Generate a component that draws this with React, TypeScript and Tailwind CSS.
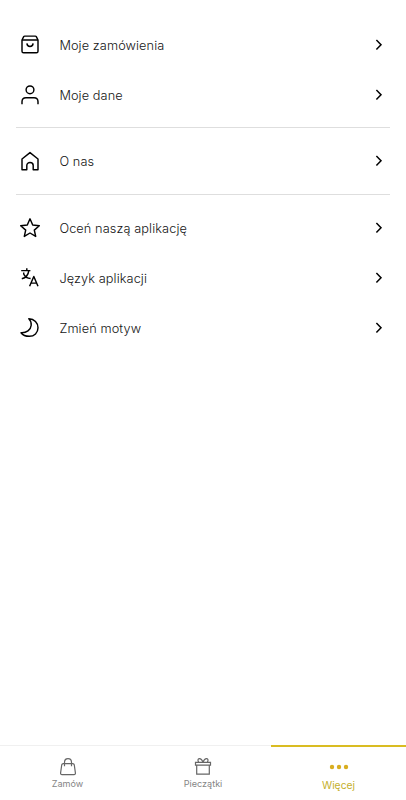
import React from "react";

const icons: Record<string, React.ReactNode> = {
  orders: (
    <>
      <path d="M4 7 5.7 3.6Q6 3.1 6.7 3.1H17.3Q18 3.1 18.3 3.6L20 7V18.2Q20 19.8 18.4 19.8H5.6Q4 19.8 4 18.2Z" />
      <path d="M4 7H20M8.9 10.4C9.3 14.6 14.7 14.6 15.1 10.4" />
    </>
  ),
  user: (
    <>
      <circle cx="12" cy="6.8" r="3.9" />
      <path d="M4 21.3V18.8Q4 14.8 8 14.8H16Q20 14.8 20 18.8V21.3" />
    </>
  ),
  home: (
    <path d="M4 20.7V10L12 3.6 20 10V20.7H15.2V16.5C15.2 12.5 8.8 12.5 8.8 16.5V20.7Z" />
  ),
  star: (
    <path d="m12 2.8 2.7 6.2 6.6.7-5 4.4 1.4 6.3L12 17l-5.7 3.4 1.4-6.3-5-4.4L9.3 9Z" />
  ),
  language: (
    <>
      <path d="M3.2 4.6H12.4M8.8 2.2V4.6M5.7 6.4V8C6.8 10.6 8.8 12.4 12.6 12.5M10.8 4.6C10.3 8.9 7.8 11.8 3.8 12.8" />
      <path d="m11.6 20.2 4.2-9.7L20 20.2M13 17.1H18.6" />
    </>
  ),
  moon: (
    <path d="M10.8 2.8C16.4 3 20 6.9 20 11.8C20 16.8 16.3 20.3 11.3 20.3C7.7 20.3 4.7 18.9 3 16.7C8.4 17.1 12.8 13.8 13.2 9.2C13.4 6.6 12.5 4.4 10.8 2.8Z" />
  ),
};

function Row({ icon, label }: { icon: string; label: string }) {
  return (
    <button className="flex h-[50px] w-full items-center pr-[21px] pl-[18px] text-left">
      <svg
        width="24"
        height="24"
        viewBox="0 0 24 24"
        fill="none"
        stroke="currentColor"
        strokeWidth="1.45"
        strokeLinejoin="round"
      >
        {icons[icon]}
      </svg>
      <span className="ml-[17.4px] flex-1 pt-[2px] text-[12.75px] font-light tracking-[0.09px] text-[#151515]">
        {label}
      </span>
      <svg
        width="12"
        height="12"
        viewBox="0 0 12 12"
        fill="none"
        stroke="currentColor"
        strokeWidth="1.5"
      >
        <path d="m3.4 1.1 4.6 4.7-4.6 4.7" />
      </svg>
    </button>
  );
}

export default function App() {
  return (
    <div className="flex h-[800px] w-[406px] flex-col bg-white font-['Inter',sans-serif] text-black">
      <main className="flex-1 pt-5">
        <Row icon="orders" label="Moje zamówienia" />
        <Row icon="user" label="Moje dane" />
        <div className="mx-4 mt-[7px] mb-2 h-px bg-[#dedede]" />
        <Row icon="home" label="O nas" />
        <div className="mx-4 mt-2 mb-2 h-px bg-[#dedede]" />
        <Row icon="star" label="Oceń naszą aplikację" />
        <Row icon="language" label="Język aplikacji" />
        <Row icon="moon" label="Zmień motyw" />
      </main>
      <nav className="grid h-[55px] grid-cols-[135px_136px_135px] text-[9.1px] text-[#858585]">
        <button className="flex flex-col items-center border-t border-[#f0f0f0] pt-[11px]">
          <svg width="18" height="20" viewBox="0 0 18 20" fill="none" stroke="#666" strokeWidth="1.2">
            <path d="M4.2 6.7H13.8Q15 6.7 15.3 8L16.4 15.8Q16.6 17.6 15 17.6H3Q1.4 17.6 1.6 15.8L2.7 8Q3 6.7 4.2 6.7Z" />
            <path d="M5.5 9.3V5.3C5.5 .4 12.5 .4 12.5 5.3V9.3" />
          </svg>
          <span className="mt-px leading-[11px]">Zamów</span>
        </button>
        <button className="flex flex-col items-center border-t border-[#f0f0f0] pt-[11px]">
          <svg width="18" height="20" viewBox="0 0 18 20" fill="none" stroke="#666" strokeWidth="1.2">
            <path d="M1.5 5.4H16.5V8.2H1.5ZM2.7 8.2V17.2H15.3V8.2" />
            <path d="M9 5.4C8 2.6 6.8 1.5 5.3 1.6C3.8 1.8 3.5 3.8 4.7 5M9 5.4C10 2.6 11.2 1.5 12.7 1.6C14.2 1.8 14.5 3.8 13.3 5" />
          </svg>
          <span className="mt-px leading-[11px]">Pieczątki</span>
        </button>
        <button className="flex flex-col items-center border-t-2 border-[#d9bc22] pt-[17px] text-[10.3px] text-[#c5b02c]">
          <svg width="20" height="6" viewBox="0 0 20 6" fill="#d9ae20">
            <circle cx="3" cy="3" r="2.2" />
            <circle cx="10" cy="3" r="2.2" />
            <circle cx="17" cy="3" r="2.2" />
          </svg>
          <span className="mt-[9px] leading-[13px]">Więcej</span>
        </button>
      </nav>
    </div>
  );
}
